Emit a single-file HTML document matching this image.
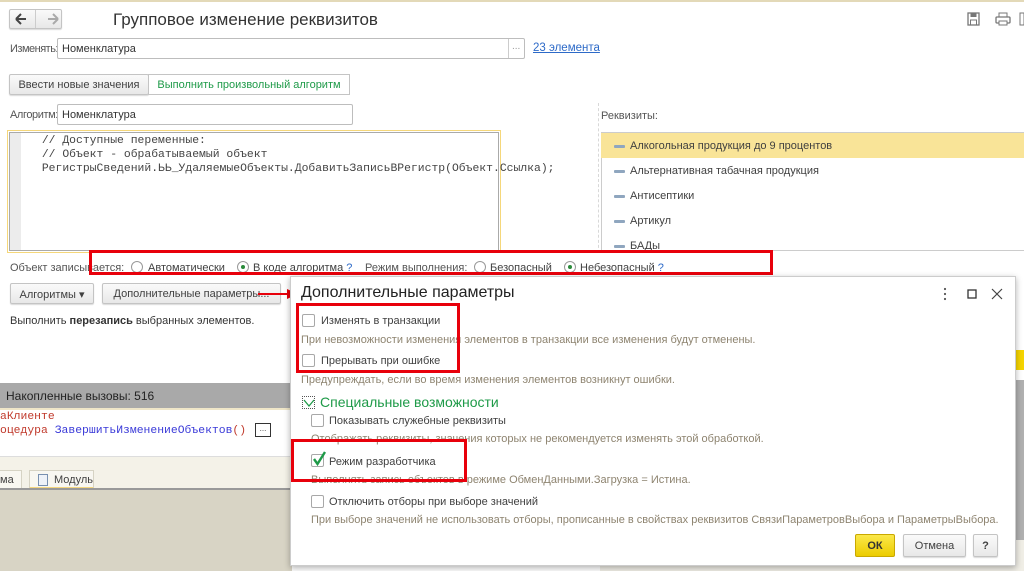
<!DOCTYPE html>
<html><head><meta charset="utf-8"><style>
*{box-sizing:border-box;margin:0;padding:0}
body{width:1024px;height:571px;overflow:hidden;position:relative;background:#fff;font-family:"Liberation Sans",sans-serif;font-size:11px;color:#404040}
.a{position:absolute;white-space:nowrap}
.inp{position:absolute;border:1px solid #bdbdbd;border-radius:2px;background:#fff;padding:4px 4px;font-size:11px;color:#333;height:21px}
.btn{position:absolute;border:1px solid #c4c4c4;border-radius:2px;background:linear-gradient(#fafafa,#e8e8e8);box-shadow:0 1px 1px rgba(0,0,0,.15);font-size:11px;color:#404040;text-align:center}
.mono{font-family:"Liberation Mono",monospace;font-size:11.4px}
.rb{position:absolute;width:12px;height:12px;border:1px solid #999;border-radius:50%;background:#fff}
.rb.on::after{content:"";position:absolute;left:3px;top:3px;width:4px;height:4px;border-radius:50%;background:#2a8a3a}
.cb{position:absolute;width:13px;height:13px;border:1px solid #a8a8a8;border-radius:2px;background:#fff}
.red{position:absolute;border:3px solid #e8000b}
.hint{position:absolute;white-space:nowrap;color:#8e8470;font-size:11px}
.li{position:absolute;left:601px;width:423px;height:25px;padding:7px 0 0 29px;font-size:11px;color:#404040}
.li::before{content:"";position:absolute;left:13px;top:12px;width:11px;height:3px;background:#8fa6bf;border-radius:1px}
</style></head><body>
<div class="a" style="left:0;top:0;width:1024px;height:2px;background:#e3d9b8"></div>
<div class="btn" style="left:9px;top:9px;width:53px;height:20px"></div>
<div class="a" style="left:35px;top:10px;width:1px;height:18px;background:#ccc"></div>
<svg class="a" style="left:15px;top:13px" width="44" height="12"><path d="M1 6L11 6M1 6L6 1M1 6L6 11" stroke="#444" stroke-width="2" fill="none"/><path d="M43 6L33 6M43 6L38 1M43 6L38 11" stroke="#aaa" stroke-width="2" fill="none"/></svg>
<div class="a" style="left:113px;top:10px;font-size:17px;color:#333">Групповое изменение реквизитов</div>
<svg class="a" style="left:967px;top:12px" width="57" height="14"><rect x="1" y="1" width="11" height="12" fill="none" stroke="#777" stroke-width="1.3"/><rect x="3.5" y="1" width="6" height="4" fill="#777"/><rect x="3.5" y="8" width="6" height="5" fill="none" stroke="#777"/><rect x="32" y="1" width="8" height="4" fill="none" stroke="#777"/><rect x="29" y="5" width="14" height="6" rx="1" fill="none" stroke="#777" stroke-width="1.3"/><rect x="32" y="9" width="8" height="4" fill="#fff" stroke="#777"/><rect x="53" y="1" width="4" height="12" fill="none" stroke="#777"/></svg>
<div class="a" style="left:10px;top:43px;color:#555;letter-spacing:-0.5px">Изменять:</div>
<div class="inp" style="left:57px;top:38px;width:468px">Номенклатура</div>
<div class="a" style="left:508px;top:39px;width:1px;height:19px;background:#ccc"></div>
<div class="a" style="left:512px;top:41px;color:#999;font-size:10px">...</div>
<div class="a" style="left:533px;top:42px;color:#2d6ac8;text-decoration:underline;font-size:11.5px">23 элемента</div>
<div class="btn" style="left:9px;top:74px;width:140px;height:21px;padding-top:4px">Ввести новые значения</div>
<div class="a" style="left:148px;top:74px;width:202px;height:21px;border:1px solid #c4c4c4;background:#fff;color:#1e9a48;text-align:center;padding-top:4px">Выполнить произвольный алгоритм</div>
<div class="a" style="left:598px;top:103px;height:150px;border-left:1px dashed #d8d8d8"></div>
<div class="a" style="left:10px;top:109px;color:#555;letter-spacing:-0.4px">Алгоритм:</div>
<div class="inp" style="left:57px;top:104px;width:296px">Номенклатура</div>
<div class="a" style="left:7px;top:130px;width:494px;height:123px;border:1px solid #f5d77a"></div>
<div class="a" style="left:9px;top:132px;width:490px;height:119px;border:1px solid #aaa;background:#fff"></div>
<div class="a" style="left:10px;top:133px;width:11px;height:117px;background:#ececec"></div>
<div class="a mono" style="left:35px;top:134px;color:#444;line-height:14px">&nbsp;// Доступные переменные:<br>&nbsp;// Объект - обрабатываемый объект<br>&nbsp;РегистрыСведений.ЬЬ_УдаляемыеОбъекты.ДобавитьЗаписьВРегистр(Объект.Ссылка);</div>
<div class="a" style="left:601px;top:110px;color:#555">Реквизиты:</div>
<div class="a" style="left:601px;top:132px;width:423px;height:119px;border:1px solid #ccc;border-right:none;overflow:hidden"></div>
<div class="li" style="top:133px;background:#f9e498">Алкогольная продукция до 9 процентов</div>
<div class="li" style="top:158px">Альтернативная табачная продукция</div>
<div class="li" style="top:183px">Антисептики</div>
<div class="li" style="top:208px">Артикул</div>
<div class="li" style="top:233px;height:17px;overflow:hidden">БАДы</div>
<div class="a" style="left:601px;top:250px;width:423px;height:1px;background:#ccc"></div>
<div class="a" style="left:10px;top:262px;color:#555">Объект записывается:</div>
<div class="rb" style="left:131px;top:261px"></div>
<div class="a" style="left:148px;top:262px">Автоматически</div>
<div class="rb on" style="left:237px;top:261px"></div>
<div class="a" style="left:253px;top:262px">В коде алгоритма <span style="color:#2d6ac8">?</span></div>
<div class="a" style="left:365px;top:262px;color:#555">Режим выполнения:</div>
<div class="rb" style="left:474px;top:261px"></div>
<div class="a" style="left:490px;top:262px">Безопасный</div>
<div class="rb on" style="left:564px;top:261px"></div>
<div class="a" style="left:580px;top:262px">Небезопасный <span style="color:#2d6ac8">?</span></div>
<div class="red" style="left:89px;top:250px;width:684px;height:25px"></div>
<div class="btn" style="left:10px;top:283px;width:84px;height:21px;padding-top:4px">Алгоритмы ▾</div>
<div class="btn" style="left:102px;top:283px;width:179px;height:21px;padding-top:4px">Дополнительные параметры...</div>
<svg class="a" style="left:258px;top:287px" width="42" height="14"><path d="M0 7L32 7" stroke="#e8000b" stroke-width="2"/><path d="M29 2L40 7L29 12Z" fill="#e8000b"/></svg>
<div class="a" style="left:10px;top:315px;color:#333">Выполнить <b>перезапись</b> выбранных элементов.</div>
<div class="a" style="left:0;top:383px;width:292px;height:25px;background:#a9a9a9;padding:6px 0 0 6px;color:#222;font-size:12px">Накопленные вызовы: 516</div>
<div class="a" style="left:0;top:408px;width:292px;height:2px;background:#efe6c8"></div>
<div class="a mono" style="left:0;top:410px;color:#c0392b;line-height:14px">аКлиенте<br>оцедура <span style="color:#3a3ad8">ЗавершитьИзменениеОбъектов</span>() </div>
<div class="a" style="left:255px;top:423px;width:16px;height:14px;border:1px solid #333;font-size:8px;text-align:center">...</div>
<div class="a" style="left:0;top:456px;width:292px;height:34px;background:#f4f2e8;border-top:1px solid #ddd"></div>
<div class="a" style="left:0;top:470px;width:22px;height:19px;border:1px solid #d6d3c4;border-left:none;background:#f8f7f1;font-size:11px;padding-top:3px">ма</div>
<div class="a" style="left:29px;top:470px;width:65px;height:19px;border:1px solid #d6d3c4;border-bottom:2px solid #f3d680;background:#f8f7f1;font-size:11px;padding:3px 0 0 24px">Модуль</div>
<div class="a" style="left:38px;top:474px;width:10px;height:12px;border:1px solid #7890b0;background:#eef2f8"></div>
<div class="a" style="left:0;top:488px;width:292px;height:83px;background:#d8d4c5;border-top:2px solid #999"></div>
<div class="a" style="left:1012px;top:350px;width:12px;height:20px;background:#f5d400"></div>
<div class="a" style="left:1012px;top:380px;width:12px;height:191px;background:#b0b0b0"></div>
<div class="a" style="left:600px;top:540px;width:424px;height:31px;background:#f0eee6"></div>
<div class="a" style="left:290px;top:276px;width:726px;height:290px;background:#fff;border:1px solid #ccc;box-shadow:0 2px 6px rgba(0,0,0,.3)"></div>
<div class="a" style="left:301px;top:284px;font-size:16px;color:#222">Дополнительные параметры</div>
<svg class="a" style="left:940px;top:287px" width="66" height="14"><circle cx="5" cy="2" r="1.1" fill="#555"/><circle cx="5" cy="7" r="1.1" fill="#555"/><circle cx="5" cy="12" r="1.1" fill="#555"/><rect x="28" y="3" width="8" height="8" fill="none" stroke="#333" stroke-width="1.3"/><path d="M52 2L62 12M62 2L52 12" stroke="#444" stroke-width="1.2"/></svg>
<div class="cb" style="left:302px;top:314px"></div>
<div class="a" style="left:321px;top:315px">Изменять в транзакции</div>
<div class="hint" style="left:301px;top:334px">При невозможности изменения элементов в транзакции все изменения будут отменены.</div>
<div class="cb" style="left:302px;top:354px"></div>
<div class="a" style="left:321px;top:355px">Прерывать при ошибке</div>
<div class="hint" style="left:301px;top:374px">Предупреждать, если во время изменения элементов возникнут ошибки.</div>
<div class="red" style="left:296px;top:303px;width:164px;height:70px"></div>
<div class="a" style="left:302px;top:396px;width:13px;height:13px;border:1px dotted #555"></div>
<svg class="a" style="left:303px;top:398px" width="12" height="10"><path d="M1 2L6 8L11 2" stroke="#1e9a48" stroke-width="1.3" fill="none"/></svg>
<div class="a" style="left:320px;top:394px;font-size:14px;color:#1e9a48">Специальные возможности</div>
<div class="cb" style="left:311px;top:414px"></div>
<div class="a" style="left:329px;top:415px">Показывать служебные реквизиты</div>
<div class="hint" style="left:311px;top:433px">Отображать реквизиты, значения которых не рекомендуется изменять этой обработкой.</div>
<div class="cb" style="left:311px;top:454px"></div>
<svg class="a" style="left:311px;top:450px" width="16" height="17"><path d="M3 9L6.5 14L14 2" stroke="#1e9a48" stroke-width="2.4" fill="none"/></svg>
<div class="a" style="left:329px;top:456px">Режим разработчика</div>
<div class="hint" style="left:311px;top:474px">Выполнять запись объектов в режиме ОбменДанными.Загрузка = Истина.</div>
<div class="red" style="left:291px;top:439px;width:176px;height:43px"></div>
<div class="cb" style="left:311px;top:495px"></div>
<div class="a" style="left:329px;top:496px">Отключить отборы при выборе значений</div>
<div class="hint" style="left:311px;top:514px">При выборе значений не использовать отборы, прописанные в свойствах реквизитов СвязиПараметровВыбора и ПараметрыВыбора.</div>
<div class="a" style="left:855px;top:534px;width:40px;height:23px;border:1px solid #c9a800;border-radius:2px;background:linear-gradient(#fbe84a,#eccc00);text-align:center;padding-top:5px;color:#333;font-weight:bold">ОК</div>
<div class="btn" style="left:903px;top:534px;width:63px;height:23px;padding-top:5px">Отмена</div>
<div class="btn" style="left:973px;top:534px;width:25px;height:23px;padding-top:5px;font-weight:bold">?</div>
</body></html>
